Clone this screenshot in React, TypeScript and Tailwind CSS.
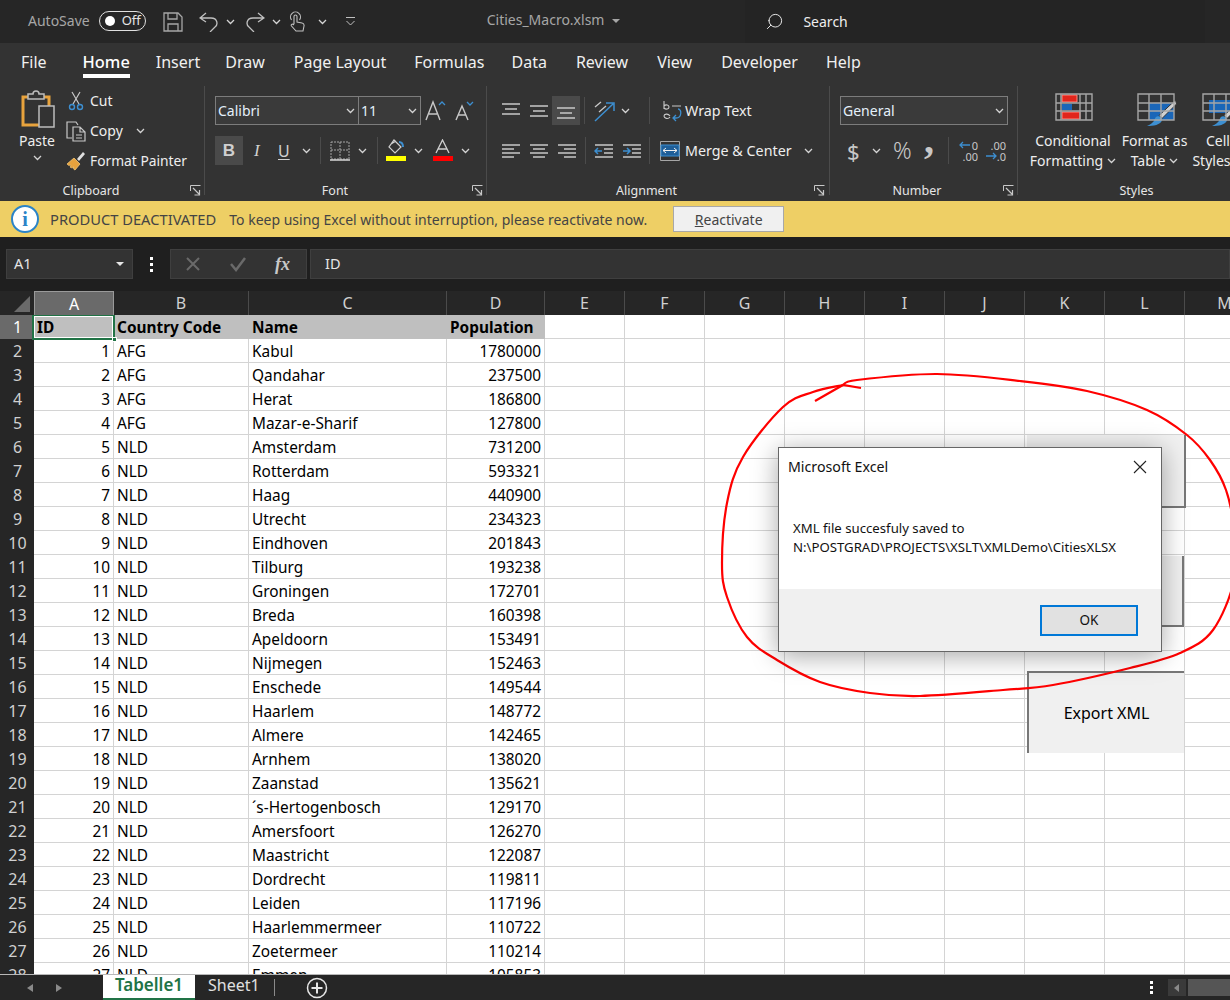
import React from 'react'
import { Search } from 'lucide-react'

const rows: [string, string, string, string][] = [
  ['1', 'AFG', 'Kabul', '1780000'],
  ['2', 'AFG', 'Qandahar', '237500'],
  ['3', 'AFG', 'Herat', '186800'],
  ['4', 'AFG', 'Mazar-e-Sharif', '127800'],
  ['5', 'NLD', 'Amsterdam', '731200'],
  ['6', 'NLD', 'Rotterdam', '593321'],
  ['7', 'NLD', 'Haag', '440900'],
  ['8', 'NLD', 'Utrecht', '234323'],
  ['9', 'NLD', 'Eindhoven', '201843'],
  ['10', 'NLD', 'Tilburg', '193238'],
  ['11', 'NLD', 'Groningen', '172701'],
  ['12', 'NLD', 'Breda', '160398'],
  ['13', 'NLD', 'Apeldoorn', '153491'],
  ['14', 'NLD', 'Nijmegen', '152463'],
  ['15', 'NLD', 'Enschede', '149544'],
  ['16', 'NLD', 'Haarlem', '148772'],
  ['17', 'NLD', 'Almere', '142465'],
  ['18', 'NLD', 'Arnhem', '138020'],
  ['19', 'NLD', 'Zaanstad', '135621'],
  ['20', 'NLD', '´s-Hertogenbosch', '129170'],
  ['21', 'NLD', 'Amersfoort', '126270'],
  ['22', 'NLD', 'Maastricht', '122087'],
  ['23', 'NLD', 'Dordrecht', '119811'],
  ['24', 'NLD', 'Leiden', '117196'],
  ['25', 'NLD', 'Haarlemmermeer', '110722'],
  ['26', 'NLD', 'Zoetermeer', '110214'],
  ['27', 'NLD', 'Emmen', '105853'],
]

const tabs: [string, string][] = [
  ['Insert', '-ml-px'],
  ['Draw', '-ml-[2px]'],
  ['Page Layout', 'ml-[2px]'],
  ['Formulas', 'ml-px'],
  ['Data', ''],
  ['Review', 'ml-[2px]'],
  ['View', 'ml-[2px]'],
  ['Developer', 'ml-[2px]'],
  ['Help', 'ml-px'],
]
const emptyCols = ['E', 'F', 'G', 'H', 'I', 'J', 'K', 'L', 'M']
const gridCols = 'grid grid-cols-[34px_80px_135px_198px_98px_repeat(9,80px)]'

// hand-drawn loop round the dialog
const loop = [
  [843, 385], [857, 380], [937, 374], [1020, 381], [1087, 391], [1147, 410], [1187, 435], [1210, 460], [1226, 490], [1234, 530],
  [1234, 580], [1213, 630], [1180, 653], [1130, 668], [1053, 685], [1003, 690], [920, 696], [870, 693], [820, 682], [777, 660],
  [747, 637], [727, 597], [722, 563], [727, 503], [743, 457], [783, 407], [813, 392], [843, 385],
]

const smoothPath = (pts: number[][]) => {
  let d = `M${pts[0][0]} ${pts[0][1]}`
  for (let i = 0; i < pts.length - 1; i++) {
    const p0 = pts[Math.max(i - 1, 0)]
    const p1 = pts[i]
    const p2 = pts[i + 1]
    const p3 = pts[Math.min(i + 2, pts.length - 1)]
    d += ` C${p1[0] + (p2[0] - p0[0]) / 6} ${p1[1] + (p2[1] - p0[1]) / 6} ${p2[0] - (p3[0] - p1[0]) / 6} ${p2[1] - (p3[1] - p1[1]) / 6} ${p2[0]} ${p2[1]}`
  }
  return d
}

function Chev({ className = '' }: { className?: string }) {
  return (
    <svg width="9" height="6" viewBox="0 0 9 6" className={className} fill="none" stroke="#d4d4d4" strokeWidth="1.3">
      <path d="M1 1l3.5 3.5L8 1" />
    </svg>
  )
}

function Launcher() {
  return (
    <svg width="11" height="11" viewBox="0 0 11 11" fill="none" stroke="#c8c8c8">
      <path d="M.5 6V.5H10.500" />
      <path d="M3 3l6 6M9.500 5v5h-5" strokeWidth="1.200" />
    </svg>
  )
}

function Sep() {
  return <div className="mt-px mb-[6px] w-px shrink-0 bg-[#4b4b4b]" />
}

function MiniSep() {
  return <div className="h-[27px] w-px shrink-0 bg-[#4b4b4b]" />
}

function Group({ width, label, labelPad, labelInner = '', launcher, children }: { width: string; label: string; labelPad: string; labelInner?: string; launcher?: boolean; children: React.ReactNode }) {
  return (
    <div className={`flex h-full shrink-0 flex-col ${width}`}>
      <div className="flex-1">{children}</div>
      <div className={`flex h-[22px] items-start pt-[2px] text-[12.500px] text-[#e6e6e6] ${labelPad}`}>
        <span className={`flex-1 text-center leading-[20px] ${labelInner}`}>{label}</span>
        {launcher && <span className="mt-[4px] ml-1"><Launcher /></span>}
      </div>
    </div>
  )
}

function Lines({ lines, color = '#c8c8c8' }: { lines: [number, number, number][]; color?: string }) {
  return (
    <svg width="20" height="18" viewBox="0 0 20 18" stroke={color} strokeWidth="1.500" fill="none">
      {lines.map(([x1, x2, y]) => (
        <path key={`${x1}${y}`} d={`M${x1} ${y}H${x2}`} />
      ))}
    </svg>
  )
}

function ComboBox({ text, className }: { text: string; className: string }) {
  return (
    <div className={`flex h-[29px] items-center justify-between border border-[#7c7c7c] bg-[#3a3a3a] pr-[3px] pl-[2px] text-[14px] text-[#e4f0fa] ${className}`}>
      <span>{text}</span>
      <Chev />
    </div>
  )
}

function GridIcon({ cols = 'M12 1v26M24 1v26', children }: { cols?: string; children: React.ReactNode }) {
  return (
    <svg width="40" height="34" viewBox="0 0 40 34" fill="none">
      {children}
      <path d={`M1 1h36v26H1zM1 10h36M1 18h36${cols}`} stroke="#a6a6a6" strokeWidth="1.400" />
    </svg>
  )
}

function Brush() {
  return (
    <g>
      <path d="M38.500 7L22 22.500l3 3L39.500 11z" fill="#d0d0d0" stroke="#333333" strokeWidth="1" />
      <path d="M10 33c6 0 14-1 15-6 0-3-4-5-6-3-2 2-1 6-9 9z" fill="#3d8fd1" />
    </g>
  )
}

function RibbonClipboard() {
  return (
    <Group width="w-[204px]" label="Clipboard" labelPad="pr-[3px]" labelInner="pr-[4px]" launcher>
      <div className="flex pt-[4px] pl-[19px]">
        <div className="flex w-[36px] flex-col items-center">
          <svg width="36" height="40" viewBox="0 0 36 40" fill="none">
            <path d="M4 8h26v28H4z" stroke="#e8a33d" strokeWidth="3" />
            <path d="M9 10V5h5c0-4 6-4 6 0h5v5z" fill="#333333" stroke="#bdbdbd" strokeWidth="1.500" />
            <path d="M20 17h15v21H20z" fill="#333333" stroke="#bdbdbd" strokeWidth="1.500" />
          </svg>
          <span className="mt-[2px] text-[14px] leading-[20px] text-[#eeeeee]">Paste</span>
          <Chev className="mt-[4px]" />
        </div>
        <div className="ml-[11px] flex flex-col gap-[10px] pt-[2px] text-[14px] leading-[20px] text-[#eeeeee]">
          <div className="flex h-[20px] items-center">
            <svg width="20" height="20" viewBox="0 0 20 20" fill="none" className="mr-[4px]">
              <path d="M6 1l7 12M14 1L7 13" stroke="#c8c8c8" strokeWidth="1.200" />
              <circle cx="6" cy="16" r="2.500" stroke="#3d8fd1" strokeWidth="1.400" />
              <circle cx="14" cy="16" r="2.500" stroke="#3d8fd1" strokeWidth="1.400" />
            </svg>
            Cut
          </div>
          <div className="flex h-[20px] items-center">
            <svg width="20" height="21" viewBox="0 0 20 21" fill="none" stroke="#c8c8c8" strokeWidth="1.200" className="mr-[4px]">
              <path d="M6 17H1V1h9l2 3" />
              <path d="M7 6h7l5 5v9H7zM14 6v5h5M10 14h6M10 17h6" />
            </svg>
            Copy
            <Chev className="ml-[13px]" />
          </div>
          <div className="flex h-[20px] items-center text-[13.800px]">
            <svg width="20" height="20" viewBox="0 0 20 20" fill="none" className="mr-[4px]">
              <path d="M1 13l7-6 6 6-5 6c-2-1-2-2-1-3-2 1-3 1-4 0 1-1 1-2 0-2-1 1-2 0-3-1z" fill="#e8a33d" stroke="#f2c879" strokeWidth=".8" />
              <path d="M11 8l6-7 2 2-6 7z" fill="#e0e0e0" />
            </svg>
            Format Painter
          </div>
        </div>
      </div>
    </Group>
  )
}

function RibbonFont() {
  return (
    <Group width="w-[281px]" label="Font" labelPad="pr-[3px]" labelInner="pr-[3px]" launcher>
      <div className="flex flex-col gap-[11px] pt-[11px] pl-[10px] text-[#d0d0d0]">
        <div className="flex items-center">
          <ComboBox text="Calibri" className="w-[144px]" />
          <ComboBox text="11" className="-ml-px w-[63px]" />
          <svg width="50" height="24" viewBox="0 0 50 24" fill="none" className="ml-[4px]" stroke="#c8c8c8">
            <path d="M1 21L8 3l7 18M4 15h8" strokeWidth="1.400" />
            <path d="M14 6l3-3 3 3" stroke="#3d8fd1" strokeWidth="1.300" />
            <path d="M31 21l6-14 6 14M33.500 16h7" strokeWidth="1.400" />
            <path d="M42 3l3 3 3-3" stroke="#3d8fd1" strokeWidth="1.300" />
          </svg>
        </div>
        <div className="flex h-[29px] items-center">
          <div className="flex h-[29px] w-[28px] items-center justify-center bg-[#4a4a4a] font-['Liberation_Sans',sans-serif] text-[17px] font-bold">B</div>
          <span className="ml-[11px] w-[9px] font-['Liberation_Serif',serif] text-[17px] italic">I</span>
          <span className="ml-[15px] w-[13px] text-[16px] underline underline-offset-2">U</span>
          <Chev className="ml-[11px]" />
          <div className="ml-[9px]"><MiniSep /></div>
          <svg width="20" height="20" viewBox="0 0 20 20" fill="none" stroke="#a6a6a6" strokeDasharray="2 1" className="ml-[9px]">
            <path d="M1 1h18v17H1zM10 1v17M1 9h18" />
            <path d="M0 19h20" stroke="#d8d8d8" strokeWidth="1.500" strokeDasharray="none" />
          </svg>
          <Chev className="ml-[8px]" />
          <div className="ml-[10px]"><MiniSep /></div>
          <svg width="21" height="24" viewBox="0 0 21 24" fill="none" className="ml-[7px]">
            <path d="M9 1l7 7-6 6-6-6zM6 5l5-3" stroke="#d0d0d0" strokeWidth="1.200" />
            <path d="M14 3c3 0 4 2 4 5" stroke="#3d8fd1" strokeWidth="2" />
            <path d="M1 17h20v5H1z" fill="#ffff00" />
          </svg>
          <Chev className="ml-[8px]" />
          <svg width="21" height="24" viewBox="0 0 21 24" fill="none" className="ml-[9px]">
            <path d="M4 14L10.500 1 17 14M6 10h9" stroke="#d0d0d0" strokeWidth="1.300" />
            <path d="M1 17h20v5H1z" fill="#ff0000" />
          </svg>
          <Chev className="ml-[8px]" />
        </div>
      </div>
    </Group>
  )
}

function RibbonAlignment() {
  return (
    <Group width="w-[342px]" label="Alignment" labelPad="pr-[4px]" labelInner="pr-[4px]" launcher>
      <div className="flex flex-col gap-[11px] pt-[11px] pl-[14px] text-[14.300px] text-[#eeeeee]">
        <div className="flex h-[29px] items-center">
          <Lines lines={[[1, 19, 2], [4, 16, 7], [1, 19, 12]]} />
          <div className="ml-[8px]"><Lines lines={[[1, 19, 4], [4, 16, 9], [1, 19, 14]]} /></div>
          <div className="ml-[3px] flex h-[29px] w-[28px] items-center justify-center bg-[#4a4a4a]"><Lines lines={[[1, 19, 6], [4, 16, 11], [1, 19, 16]]} /></div>
          <div className="ml-[4px]"><MiniSep /></div>
          <svg width="22" height="22" viewBox="0 0 22 22" fill="none" className="ml-[8px]">
            <path d="M2 7l6-5M6 12l7-6" stroke="#c8c8c8" strokeWidth="1.300" />
            <path d="M2 21L20 4M13 3h8v8" stroke="#3d8fd1" strokeWidth="1.500" />
          </svg>
          <Chev className="ml-[6px]" />
          <div className="ml-[19px]"><MiniSep /></div>
          <svg width="20" height="22" viewBox="0 0 20 22" fill="none" className="ml-[13px]">
            <path d="M1 1v8M1 6c2-2 5-1 5 1s-3 3-5 1M9 6h9M7 16c-2-3-6-2-6 0s4 4 6 1" stroke="#c8c8c8" strokeWidth="1.100" />
            <path d="M15 9c4 0 4 9-2 9h-2m2-3l-3 3 3 3" stroke="#3d8fd1" strokeWidth="1.300" />
          </svg>
          <span className="ml-[2px]">Wrap Text</span>
        </div>
        <div className="flex h-[29px] items-center">
          <Lines lines={[[1, 19, 3], [1, 13, 7], [1, 19, 11], [1, 13, 15]]} />
          <div className="ml-[8px]"><Lines lines={[[1, 19, 3], [4, 16, 7], [1, 19, 11], [4, 16, 15]]} /></div>
          <div className="ml-[8px]"><Lines lines={[[1, 19, 3], [7, 19, 7], [1, 19, 11], [7, 19, 15]]} /></div>
          <div className="ml-[8px]"><MiniSep /></div>
          <svg width="20" height="18" viewBox="0 0 20 18" fill="none" className="ml-[8px]">
            <path d="M1 3h18M10 7h9M10 11h9M1 15h18" stroke="#c8c8c8" strokeWidth="1.500" />
            <path d="M8 9H1m3-3L1 9l3 3" stroke="#3d8fd1" strokeWidth="1.500" />
          </svg>
          <svg width="20" height="18" viewBox="0 0 20 18" fill="none" className="ml-[8px]">
            <path d="M1 3h18M10 7h9M10 11h9M1 15h18" stroke="#c8c8c8" strokeWidth="1.500" />
            <path d="M1 9h7M5 6l3 3-3 3" stroke="#3d8fd1" strokeWidth="1.500" />
          </svg>
          <div className="ml-[7px]"><MiniSep /></div>
          <svg width="20" height="20" viewBox="0 0 20 20" fill="none" className="ml-[10px]">
            <path d="M.5.5h19v19H.500z" stroke="#a6a6a6" />
            <path d="M1 4h18v11H1z" fill="#1f5f99" stroke="#3d8fd1" />
            <path d="M3 9.500h14M6 7L3 9.500 6 12M14 7l3 2.500-3 2.500" stroke="#f0f0f0" />
          </svg>
          <span className="ml-[5px]">Merge &amp; Center</span>
          <Chev className="ml-[12px]" />
        </div>
      </div>
    </Group>
  )
}

function RibbonNumber() {
  return (
    <Group width="w-[187px]" label="Number" labelPad="pl-[5px] pr-[3px]" launcher>
      <div className="flex flex-col gap-[11px] pt-[11px] pl-[10px] text-[#c8c8c8]">
        <ComboBox text="General" className="w-[168px]" />
        <div className="flex h-[29px] items-center">
          <span className="ml-[7px] w-[13px] text-[22px] leading-none">$</span>
          <Chev className="ml-[12px]" />
          <span className="ml-[12px] w-[22px] text-[23px] leading-none font-light">%</span>
          <span className="ml-[9px] h-[29px] w-[14px] font-['Liberation_Serif',serif] text-[40px] leading-[8px] font-bold">,</span>
          <div className="ml-[10px]"><MiniSep /></div>
          <div className="ml-[8px] flex w-[21px] flex-col items-end text-[11px] leading-[11px]">
            <div className="flex items-center">
              <svg width="12" height="10" viewBox="0 0 12 10" fill="none" stroke="#3d8fd1" strokeWidth="1.300">
                <path d="M11 5H1m3-3L1 5l3 3" />
              </svg>
              <span className="ml-px">0</span>
            </div>
            <span>.00</span>
          </div>
          <div className="ml-[7px] flex w-[21px] flex-col items-end text-[11px] leading-[11px]">
            <span>.00</span>
            <div className="flex items-center">
              <svg width="12" height="10" viewBox="0 0 12 10" fill="none" stroke="#3d8fd1" strokeWidth="1.300">
                <path d="M1 5h10M8 2l3 3-3 3" />
              </svg>
              <span>.0</span>
            </div>
          </div>
        </div>
      </div>
    </Group>
  )
}

function RibbonStyles() {
  return (
    <Group width="w-[240px]" label="Styles" labelPad="pr-[3px]">
      <div className="flex pt-[8px] text-center text-[14px] leading-[20px] text-[#eeeeee]">
        <div className="ml-[10px] flex w-[90px] shrink-0 flex-col items-center">
          <div className="ml-[4px]">
            <GridIcon cols="M6 1v26M25 1v26M31 1v26">
              <path d="M7 2h15v7H7zM7 19h18v7H7z" fill="#e1251b" stroke="#ff8a80" />
              <path d="M7 11h10v6H7z" fill="#1a66b8" />
            </GridIcon>
          </div>
          <div className="mt-[4px]">Conditional</div>
          <div className="flex items-center whitespace-nowrap">Formatting<Chev className="ml-[4px]" /></div>
        </div>
        <div className="ml-[-6px] flex w-[85px] shrink-0 flex-col items-center">
          <div className="ml-[4px]">
            <GridIcon>
              <path d="M12 10h25v17H12z" fill="#1a66b8" />
              <Brush />
            </GridIcon>
          </div>
          <div className="mt-[4px] whitespace-nowrap">Format as</div>
          <div className="flex items-center">Table<Chev className="ml-[4px]" /></div>
        </div>
        <div className="ml-[-14px] flex w-[70px] shrink-0 flex-col items-center">
          <div className="ml-[8px]">
            <GridIcon>
              <path d="M7 7h30v13H7z" fill="#1a66b8" />
              <Brush />
            </GridIcon>
          </div>
          <div className="mt-[4px]">Cell</div>
          <div className="flex items-center">Styles<Chev className="ml-[4px]" /></div>
        </div>
      </div>
    </Group>
  )
}

function Cell({ children, className = '' }: { children?: React.ReactNode; className?: string }) {
  return <div className={`overflow-hidden border-r border-b border-[#d4d4d4] px-[3px] pt-[3px] leading-[20px] whitespace-nowrap ${className}`}>{children}</div>
}

function SheetRow({ index, row }: { index: number; row: string[] }) {
  return (
    <div className={`${gridCols} h-6`}>
      <div className="bg-[#262626] pl-[1px] text-center text-[16px] leading-[24px] text-[#d0d0d0]">{index}</div>
      <Cell className="text-right">{row[0]}</Cell>
      <Cell>{row[1]}</Cell>
      <Cell>{row[2]}</Cell>
      <Cell className="text-right">{row[3]}</Cell>
      {emptyCols.map((c) => <Cell key={c} />)}
    </div>
  )
}

export default function App() {
  return (
    <div className="relative flex h-[1000px] w-[1230px] flex-col overflow-hidden bg-white font-['Noto_Sans','Open_Sans',sans-serif]">
      {/* Title bar */}
      <div className="flex h-[43px] shrink-0 items-center bg-[#262626] text-[14px] text-[#a6a6a6]">
        <span className="-mt-[2px] ml-[28px]">AutoSave</span>
        <div className="-mt-[2px] ml-[9px] flex h-[20px] w-[47px] items-center rounded-full border border-[#e0e0e0] pl-[5px] text-[13px] text-[#e6e6e6]">
          <span className="h-[10px] w-[10px] rounded-full bg-white" />
          <span className="ml-[7px]">Off</span>
        </div>
        <svg width="20" height="20" viewBox="0 0 20 20" fill="none" stroke="#a6a6a6" strokeWidth="1.300" className="ml-[17px]">
          <path d="M1 1h14l4 4v14H1zM5 1v6h9V1M5 19v-7h10v7" />
        </svg>
        <svg width="20" height="20" viewBox="0 0 20 20" fill="none" stroke="#c0c0c0" strokeWidth="1.300" className="ml-[16px]">
          <path d="M7 1L1 6l6 4M1 6h11c7 0 7 7 4 9l-5 5" />
        </svg>
        <Chev className="ml-[7px]" />
        <svg width="20" height="20" viewBox="0 0 20 20" fill="none" stroke="#c0c0c0" strokeWidth="1.300" className="ml-[10px]">
          <path d="M13 1l6 5-6 4M19 6H8c-7 0-7 7-4 9l5 5" />
        </svg>
        <Chev className="ml-[7px]" />
        <svg width="16" height="21" viewBox="0 0 16 21" fill="none" stroke="#c0c0c0" strokeWidth="1.100" className="ml-[8px]">
          <path d="M2.500 9a5 5 0 1 1 8 0" />
          <path d="M5 13V5.500a1.500 1.500 0 0 1 3 0V11l5 1c1.500.3 2.300 1.300 2 3l-1 5H7l-4.500-5c-1-1.200.7-2.500 2-1.500L5 14" />
        </svg>
        <Chev className="ml-[13px]" />
        <svg width="11" height="11" viewBox="0 0 11 11" fill="none" stroke="#c0c0c0" className="ml-[18px]">
          <path d="M1 1.500h9M1.500 5l4 4 4-4" />
        </svg>
        <span className="-mt-[4px] ml-[131px]">Cities_Macro.xlsm</span>
        <div className="-mt-[2px] ml-[8px] h-0 w-0 border-x-[4px] border-t-[4px] border-x-transparent border-t-[#a6a6a6]" />
        <div className="ml-[125px] flex h-full w-[460px] items-center bg-[#242424] text-[#eeeeee]">
          <Search size={19} strokeWidth={1.2} color="#eeeeee" className="ml-[20px] -scale-x-100" />
          <span className="ml-[19px] -mt-[1px]">Search</span>
        </div>
      </div>

      {/* Tabs */}
      <div className="flex h-[42px] shrink-0 items-start gap-[27px] bg-[#333333] pt-[7px] pl-[21px] text-[16px] leading-[24px] text-[#f0f0f0]">
        <span className="mr-[9px]">File</span>
        <div className="flex h-[28px] flex-col items-start border-b-[4px] border-white text-[16.400px] font-medium text-white">Home</div>
        {tabs.map(([t, shift]) => (
          <span key={t} className={shift}>{t}</span>
        ))}
      </div>

      {/* Ribbon */}
      <div className="flex h-[116px] shrink-0 bg-[#333333]">
        <RibbonClipboard />
        <Sep />
        <RibbonFont />
        <Sep />
        <RibbonAlignment />
        <Sep />
        <RibbonNumber />
        <Sep />
        <RibbonStyles />
      </div>

      {/* Product notice */}
      <div className="flex h-[36px] shrink-0 items-center bg-[#eecf65] text-[14px] text-[#444444]">
        <div className="ml-[11px] flex h-[28px] w-[28px] items-center justify-center rounded-full border-2 border-[#2b84c8] bg-white font-['Liberation_Serif',serif] text-[20px] font-bold text-[#2b84c8]">i</div>
        <span className="ml-[11px] text-[14.700px]">PRODUCT DEACTIVATED</span>
        <span className="ml-[13px]">To keep using Excel without interruption, please reactivate now.</span>
        <div className="ml-[26px] flex h-[26px] w-[111px] items-center justify-center border border-[#a8a8a8] bg-[#f0f0f0]">
          <span><span className="underline">R</span>eactivate</span>
        </div>
      </div>

      {/* Formula bar */}
      <div className="flex h-[54px] shrink-0 items-start gap-0 bg-[#1f1f1f] pt-[12px] text-[14.500px] text-[#e6e6e6]">
        <div className="ml-[6px] flex h-[30px] w-[127px] items-center justify-between border border-[#3f3f3f] bg-[#333333] pr-[8px] pl-[7px]">
          <span>A1</span>
          <div className="h-0 w-0 border-x-[4px] border-t-[4px] border-x-transparent border-t-[#e6e6e6]" />
        </div>
        <div className="ml-[16px] flex h-[30px] w-[4px] flex-col items-center justify-center gap-[3px]">
          <span className="h-[3px] w-[3px] bg-white" />
          <span className="h-[3px] w-[3px] bg-white" />
          <span className="h-[3px] w-[3px] bg-white" />
        </div>
        <div className="ml-[17px] flex h-[30px] w-[137px] items-center border border-[#3f3f3f] bg-[#333333]">
          <svg width="16" height="16" viewBox="0 0 16 16" fill="none" stroke="#6a6a6a" strokeWidth="2" className="ml-[14px]">
            <path d="M2 2l12 12M14 2L2 14" />
          </svg>
          <svg width="18" height="16" viewBox="0 0 18 16" fill="none" stroke="#6a6a6a" strokeWidth="2.500" className="ml-[28px]">
            <path d="M2 8l5 6L16 2" />
          </svg>
          <span className="ml-[28px] font-['Liberation_Serif',serif] text-[18px] font-bold text-[#c8c8c8] italic">fx</span>
        </div>
        <div className="ml-[3px] flex h-[30px] flex-1 items-center border border-[#3f3f3f] bg-[#333333] pl-[14px]">ID</div>
      </div>

      {/* Column header */}
      <div className={`${gridCols} h-6 shrink-0 bg-[#262626] text-center text-[16px] leading-[24px] text-[#d0d0d0]`}>
        <div className="flex items-center justify-end pr-[4px]">
          <div className="h-0 w-0 border-b-[16px] border-l-[16px] border-b-[#6a6a6a] border-l-transparent" />
        </div>
        <div className="border-x border-t border-[#9a9a9a] border-b-0 bg-[#6a6a6a] text-white">A</div>
        {['B', 'C', 'D', ...emptyCols].map((c) => (
          <div key={c} className="border-r border-[#4b4b4b]">{c}</div>
        ))}
      </div>

      {/* Cells */}
      <div className="min-h-0 flex-1 overflow-hidden text-[15.400px] text-black">
        <div className={`${gridCols} h-6`}>
          <div className="bg-[#6a6a6a] pl-[1px] text-center text-[16px] leading-[24px] text-white">1</div>
          <div className="relative bg-[#bfbfbf] px-[3px] pt-[3px] leading-[20px] font-bold">
            ID
            <div className="absolute -top-px -right-px -bottom-px -left-[2px] border-2 border-[#217346]">
              <div className="h-full w-full border border-white" />
            </div>
            <div className="absolute -right-[3px] -bottom-[3px] h-[5px] w-[5px] border border-white bg-[#217346]" />
          </div>
          <div className="bg-[#bfbfbf] px-[3px] pt-[3px] leading-[20px] font-bold">Country Code</div>
          <div className="bg-[#bfbfbf] px-[3px] pt-[3px] leading-[20px] font-bold">Name</div>
          <div className="bg-[#bfbfbf] px-[3px] pt-[3px] leading-[20px] font-bold">Population</div>
          {emptyCols.map((c) => <Cell key={c} />)}
        </div>
        {rows.map((row, i) => (
          <SheetRow key={row[0]} index={i + 2} row={row} />
        ))}
      </div>

      {/* Sheet tabs */}
      <div className="flex h-[26px] shrink-0 items-stretch border-t border-[#b8b8b8] bg-[#262626] text-[16px] text-[#e0e0e0]">
        <div className="ml-[27px] flex items-center gap-[23px]">
          <div className="h-0 w-0 border-y-[4px] border-r-[6px] border-y-transparent border-r-[#8a8a8a]" />
          <div className="h-0 w-0 border-y-[4px] border-l-[6px] border-y-transparent border-l-[#8a8a8a]" />
        </div>
        <div className="ml-[41px] flex w-[92px] items-center justify-center border-b-2 border-[#217346] bg-white pb-[3px] text-[17px] font-semibold text-[#217346]">Tabelle1</div>
        <div className="ml-[13px] flex items-center pb-[5px]">Sheet1</div>
        <div className="my-[4px] ml-[14px] w-px bg-[#8a8a8a]" />
        <div className="ml-[31px] flex items-center">
          <svg width="22" height="22" viewBox="0 0 22 22" fill="none" stroke="#e6e6e6" strokeWidth="1.500">
            <circle cx="11" cy="11" r="9.500" />
            <path d="M11 5.500v11M5.500 11h11" strokeWidth="2" />
          </svg>
        </div>
        <div className="ml-[822px] flex flex-col items-center justify-center gap-[2px]">
          <span className="h-[3px] w-[3px] bg-white" />
          <span className="h-[3px] w-[3px] bg-white" />
          <span className="h-[3px] w-[3px] bg-white" />
        </div>
        <div className="my-[4px] ml-[15px] flex w-[18px] items-center justify-center bg-[#3a3a3a]">
          <div className="h-0 w-0 border-y-[4px] border-r-[5px] border-y-transparent border-r-[#8a8a8a]" />
        </div>
        <div className="my-[4px] ml-[2px] flex-1 bg-[#555555]" />
      </div>

      {/* Floating macro buttons on the sheet */}
      <div className="absolute top-[435px] left-[1027px] h-[73px] w-[159px] border-r-2 border-b-2 border-[#777777] bg-[#f0f0f0]" />
      <div className="absolute top-[556px] left-[1027px] h-[71px] w-[157px] border-r-2 border-b-2 border-[#777777] bg-[#f0f0f0]" />
      <div className="absolute top-[671px] left-[1027px] flex h-[82px] w-[157px] items-center justify-center border-t-2 border-l-2 border-[#777777] bg-[#f0f0f0] text-[16px] text-black">Export XML</div>

      {/* Annotation */}
      <svg className="pointer-events-none absolute top-0 left-0" width="1230" height="1000" fill="none" stroke="#ff0000" strokeWidth="2.200">
        <path d={smoothPath(loop)} />
        <path d="M815 401L843 385L861 388" />
      </svg>

      {/* Message box */}
      <div className="absolute top-[447px] left-[778px] flex h-[205px] w-[384px] flex-col border border-[#666666] bg-white text-[#111111] shadow-[0_4px_24px_rgba(0,0,0,0.35)]">
        <div className="flex h-[38px] items-center justify-between pr-[14px] pb-[1px] pl-[9px] text-[14.200px]">
          <span>Microsoft Excel</span>
          <svg width="14" height="14" viewBox="0 0 14 14" fill="none" stroke="#222222" strokeWidth="1.100">
            <path d="M1 1l12 12M13 1L1 13" />
          </svg>
        </div>
        <div className="flex-1 pt-[33px] pl-[14px] text-[13.200px] leading-[19px]">
          <div>XML file succesfuly saved to</div>
          <div className="whitespace-nowrap">N:\POSTGRAD\PROJECTS\XSLT\XMLDemo\CitiesXLSX</div>
        </div>
        <div className="flex h-[62px] items-start justify-end bg-[#f0f0f0] pt-[16px] pr-[23px]">
          <div className="flex h-[31px] w-[98px] items-center justify-center border-2 border-[#0078d7] bg-[#e1e1e1] text-[13.500px]">OK</div>
        </div>
      </div>
    </div>
  )
}
